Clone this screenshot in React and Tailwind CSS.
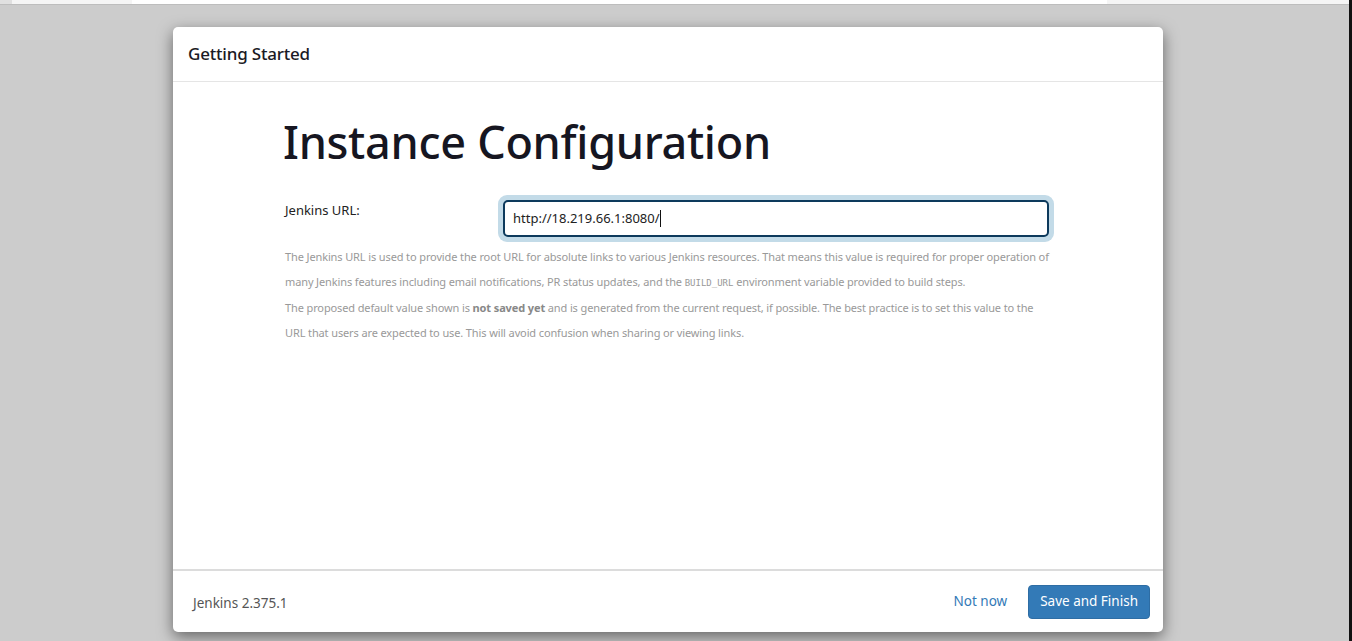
export default function App() {
  const font = { fontFamily: '"Noto Sans", "Open Sans", sans-serif' };
  return (
    <div className="w-[1352px] h-[641px] bg-[#cccccc] flex flex-col overflow-hidden relative" style={font}>
      <div className="h-[5px] bg-[#f5f5f5] border-b border-[#bdbdbd] flex shrink-0">
        <div className="w-[12px] bg-[#e0e0e0]"></div>
        <div className="ml-[120px] w-[975px] bg-white"></div>
      </div>
      <div className="absolute right-0 top-0 w-[3px] h-[641px] bg-[#111]"></div>
      <div className="flex-1 flex justify-start pl-[173px] pt-[22px]">
        <div className="w-[990px] h-[605px] bg-white rounded-[5px] shadow-[0_5px_15px_rgba(0,0,0,0.5)] flex flex-col">
          <div className="h-[55px] border-b border-[#e5e5e5] flex items-center px-[15px] shrink-0">
            <span className="text-[17px] font-medium text-[#1a1a24] tracking-[-0.2px]">Getting Started</span>
          </div>
          <div className="flex-1 pl-[110px] pr-[108px]">
            <h1 className="text-[45px] leading-none font-medium text-[#161621] mt-[37px] tracking-[-0.3px]">Instance Configuration</h1>
            <div className="flex mt-[31px]">
              <div className="w-[215px] pl-[2px] pt-[6px] text-[13px] text-[#222]">Jenkins URL:</div>
              <div className="w-[556px] p-[5px] bg-[#c3dbe8] rounded-[9px]">
                <div className="h-[37px] border-2 border-[#0d3a5c] rounded-[5px] bg-white flex items-center pl-[8px] text-[13px] text-[#222]">
                  http://18.219.66.1:8080/<span className="inline-block w-px h-[17px] bg-[#111]"></span>
                </div>
              </div>
            </div>
            <div className="mt-[2px] pl-[2px] text-[11px] leading-[25.4px] text-[#999] tracking-[-0.12px]">
              <p>The Jenkins URL is used to provide the root URL for absolute links to various Jenkins resources. That means this value is required for proper operation of many Jenkins features including email notifications, PR status updates, and the <code className="text-[9px] leading-none tracking-normal" style={{ fontFamily: '"DejaVu Sans Mono", monospace' }}>BUILD_URL</code> environment variable provided to build steps.</p>
              <p>The proposed default value shown is <b className="font-bold text-[#888]">not saved yet</b> and is generated from the current request, if possible. The best practice is to set this value to the URL that users are expected to use. This will avoid confusion when sharing or viewing links.</p>
            </div>
          </div>
          <div className="h-[63px] border-t-2 border-[#dcdcdc] flex items-center pl-[20px] pr-[13px] shrink-0">
            <span className="text-[13.5px] text-[#555] mt-[4px]">Jenkins 2.375.1</span>
            <div className="ml-auto flex items-center gap-[21px]">
              <span className="text-[13.5px] text-[#337ab7]">Not now</span>
              <button className="h-[34px] px-[11px] bg-[#337ab7] text-white text-[13.5px] rounded-[4px] border border-[#2e6da4]">Save and Finish</button>
            </div>
          </div>
        </div>
      </div>
    </div>
  );
}
